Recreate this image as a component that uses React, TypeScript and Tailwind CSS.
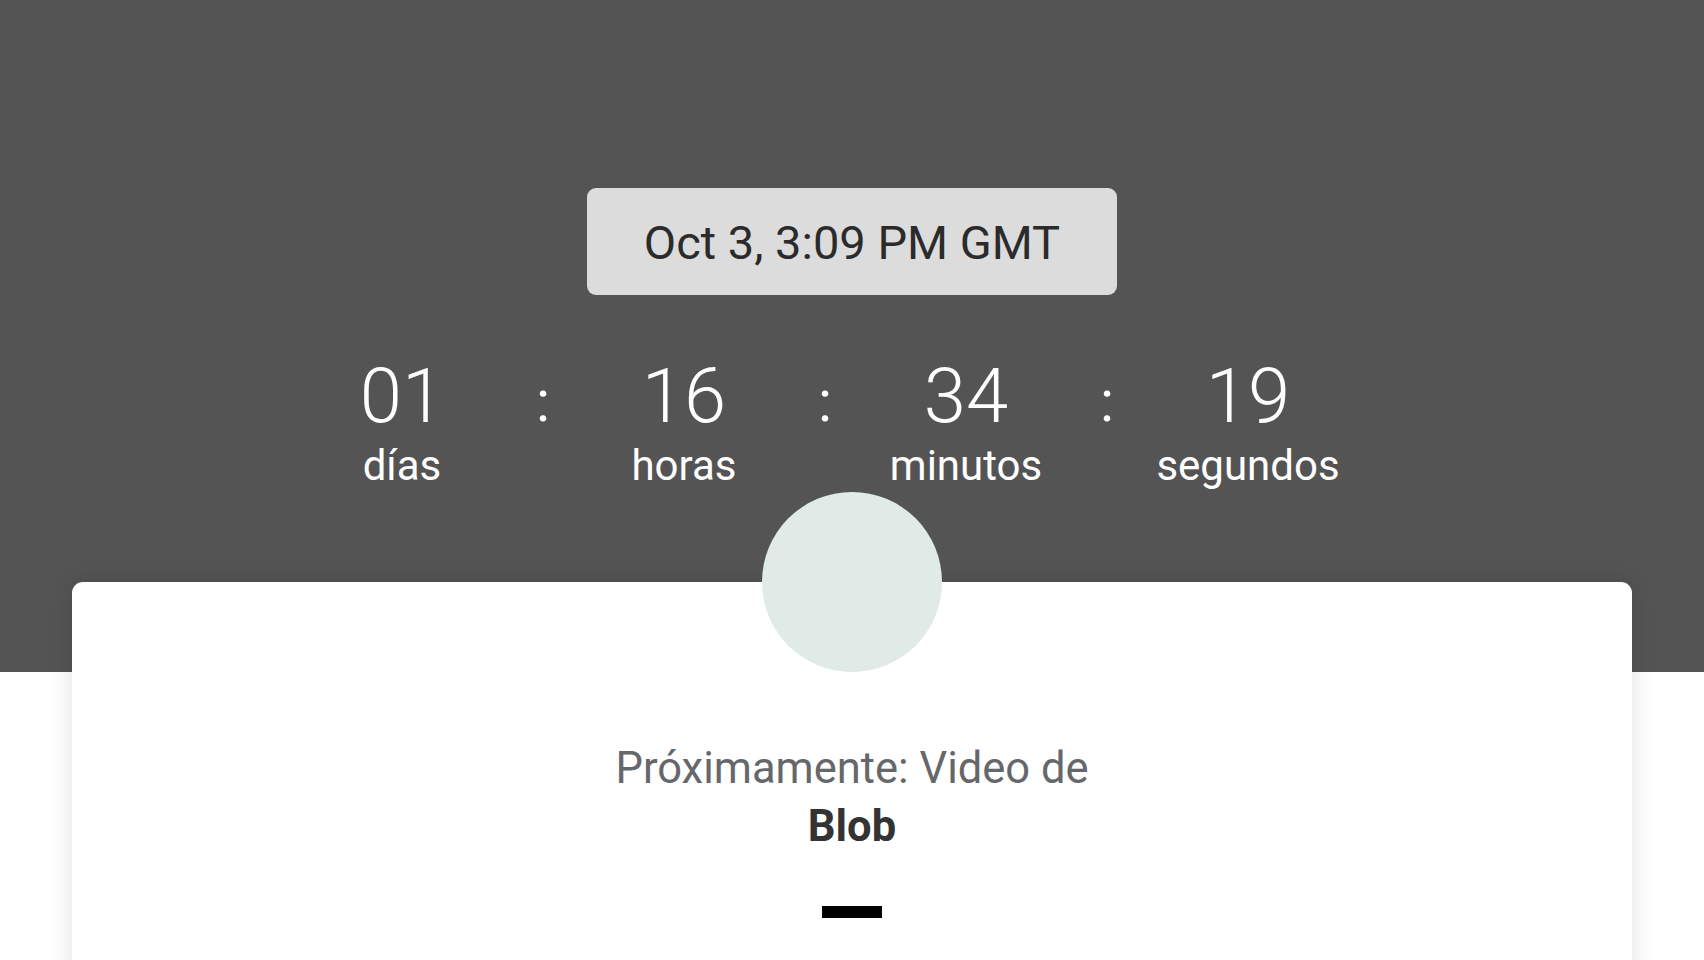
export default function App() {
  const units = [
    { value: '01', label: 'días' },
    { value: '16', label: 'horas' },
    { value: '34', label: 'minutos' },
    { value: '19', label: 'segundos' },
  ];

  return (
    <div className="h-[960px] overflow-hidden bg-white font-['Roboto',sans-serif]">
      {/* Header with date + countdown */}
      <div className="h-[672px] bg-[#545454] pt-[188px]">
        <div className="flex justify-center">
          <div className="flex h-[107px] w-[530px] items-center justify-center rounded-[9px] bg-[#dcdcdc] pt-[4px] text-[47px] text-[#2b2b2b]">
            Oct 3, 3:09 PM GMT
          </div>
        </div>

        <div className="mt-[63px] flex justify-center pr-[54px]">
          {units.map((u, i) => (
            <div key={u.label} className="flex">
              {i > 0 && (
                <div className="w-[82px] pt-[5px] text-center text-[58px] leading-[76px] text-white">:</div>
              )}
              <div className="flex w-[200px] flex-col items-center text-white">
                <span className="text-[76px] font-light leading-[76px]">{u.value}</span>
                <span className="mt-[11px] text-[42px] leading-[42px]">{u.label}</span>
              </div>
            </div>
          ))}
        </div>
      </div>

      {/* Card */}
      <div className="relative mx-[72px] -mt-[90px] rounded-t-[11px] bg-white pb-[120px] pt-[158px] text-center shadow-[0_0_24px_rgba(0,0,0,0.12)]">
        <div className="absolute -top-[90px] left-1/2 h-[180px] w-[180px] -translate-x-1/2 rounded-full bg-[#e0ebe7]" />
        <p className="text-[43.5px] leading-[58px] text-[#66676b]">Próximamente: Video de</p>
        <p className="text-[43.5px] font-bold leading-[58px] text-[#333333]">Blob</p>
        <div className="mx-auto mt-[50px] h-[12px] w-[60px] bg-black" />
      </div>
    </div>
  );
}
